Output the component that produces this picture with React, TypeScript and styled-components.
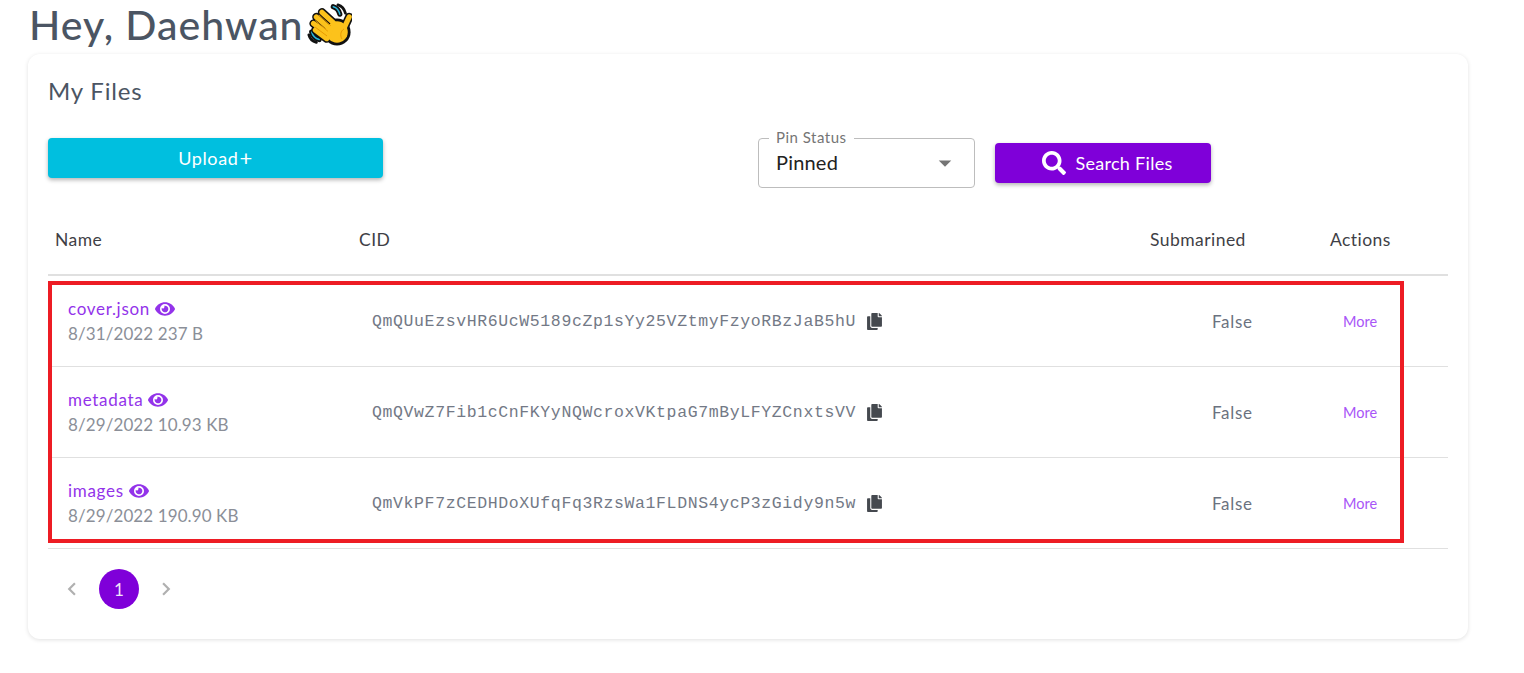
import React from "react";
import styled, { createGlobalStyle } from "styled-components";
import { FaCopy, FaEye, FaSearch } from "react-icons/fa";
import { MdArrowDropDown, MdChevronLeft, MdChevronRight } from "react-icons/md";

const font = `Lato, "Open Sans", sans-serif`;

const files = [
  {
    name: "cover.json",
    meta: "8/31/2022 237 B",
    cid: "QmQUuEzsvHR6UcW5189cZp1sYy25VZtmyFzyoRBzJaB5hU",
  },
  {
    name: "metadata",
    meta: "8/29/2022 10.93 KB",
    cid: "QmQVwZ7Fib1cCnFKYyNQWcroxVKtpaG7mByLFYZCnxtsVV",
  },
  {
    name: "images",
    meta: "8/29/2022 190.90 KB",
    cid: "QmVkPF7zCEDHDoXUfqFq3RzsWa1FLDNS4ycP3zGidy9n5w",
  },
];

// waving hand, one black pass for the outline and one yellow pass on top
const fingers = "M21 12L33 23M15 17L30 30M12 24L28 35M14 31L26 40M50 17L44 30";

const Wave = () => (
  <WaveIcon viewBox="5 1 48 48">
    <g fill="none" strokeLinecap="round">
      <path d="M33 6c4 1 6 4 7 8" stroke="#111" strokeWidth="5.5" />
      <path d="M10 33c1 4 4 7 8 8" stroke="#111" strokeWidth="5.5" />
      <path d="M33 6c4 1 6 4 7 8M10 33c1 4 4 7 8 8" stroke="#2bb7dc" strokeWidth="1.6" />
      <path d="M38 4c4 1 7 5 8 9" stroke="#111" strokeWidth="3" />
      <path d="M7 36c1 4 4 7 8 8" stroke="#111" strokeWidth="3" />
      <path d={fingers} stroke="#111" strokeWidth="9" />
    </g>
    <circle cx="37" cy="33" r="14.5" fill="#111" />
    <circle cx="37" cy="33" r="11.5" fill="#fcc21b" />
    <path d={fingers} fill="none" stroke="#fcc21b" strokeWidth="5.6" strokeLinecap="round" />
    <path
      d="M18 15L30 26M14 21L27 32M14 28L26 37M44 30c-3 2-4 6-2 10"
      fill="none"
      stroke="#e59600"
      strokeWidth="1"
      strokeLinecap="round"
    />
  </WaveIcon>
);

const App = () => {
  return (
    <Page>
      <GlobalStyle />
      <Title>
        Hey, Daehwan
        <Wave />
      </Title>
      <Card>
        <CardTitle>My Files</CardTitle>
        <Toolbar>
          <UploadButton>
            Upload<PlusSign>+</PlusSign>
          </UploadButton>
          <FilterGroup>
            <SelectBox>
              <SelectLegend>Pin Status</SelectLegend>
              <SelectValue>Pinned</SelectValue>
              <MdArrowDropDown color="#757575" size={30} />
            </SelectBox>
            <SearchButton>
              <FaSearch size={24} />
              Search Files
            </SearchButton>
          </FilterGroup>
        </Toolbar>
        <Table>
          <HeaderRow>
            <HeaderCell>Name</HeaderCell>
            <HeaderCell>CID</HeaderCell>
            <HeaderCell>Submarined</HeaderCell>
            <HeaderCell>Actions</HeaderCell>
          </HeaderRow>
          <Rows>
            <Highlight />
            {files.map((file) => (
              <Row key={file.cid}>
                <NameCell>
                  <FileName>
                    {file.name}
                    <FaEye size={20} />
                  </FileName>
                  <FileMeta>{file.meta}</FileMeta>
                </NameCell>
                <CidCell>
                  <Cid>{file.cid}</Cid>
                  <FaCopy color="#45494f" size={17} />
                </CidCell>
                <Status>False</Status>
                <More>More</More>
              </Row>
            ))}
          </Rows>
        </Table>
        <Pager>
          <MdChevronLeft color="#b0b0b0" size={26} />
          <PageNumber>1</PageNumber>
          <MdChevronRight color="#b0b0b0" size={26} />
        </Pager>
      </Card>
    </Page>
  );
};

export default App;

const GlobalStyle = createGlobalStyle`
  html, body {
    margin: 0;
    background: #fff;
    font-family: ${font};
  }
`;
const Page = styled.div`
  padding: 0 56px 0 28px;
  height: 673px;
  box-sizing: border-box;
  overflow: hidden;
`;
const Title = styled.h1`
  display: flex;
  align-items: center;
  height: 54px;
  box-sizing: border-box;
  margin: 0;
  padding: 0 0 6px 1px;
  font-size: 41px;
  font-weight: 500;
  letter-spacing: 1px;
  color: #4b5563;
`;
const WaveIcon = styled.svg`
  align-self: flex-start;
  width: 45px;
  height: 45px;
  margin: 2px 0 0 3px;
`;
const Card = styled.div`
  height: 585px;
  box-sizing: border-box;
  padding: 20px;
  border-radius: 12px;
  background: #fff;
  box-shadow: 0 1px 4px rgba(0, 0, 0, 0.12);
`;
const CardTitle = styled.div`
  height: 33px;
  line-height: 33px;
  font-size: 24px;
  letter-spacing: 0.8px;
  color: #4b5563;
`;
const Toolbar = styled.div`
  display: flex;
  justify-content: space-between;
  align-items: flex-start;
  margin-top: 31px;
  padding-right: 237px;
`;
const UploadButton = styled.button`
  display: flex;
  align-items: center;
  justify-content: center;
  width: 335px;
  height: 40px;
  border: 0;
  border-radius: 4px;
  background: #00bfdf;
  color: #fff;
  font-family: ${font};
  font-size: 18px;
  letter-spacing: 0.6px;
  box-shadow: 0 2px 4px rgba(0, 0, 0, 0.3);
`;
const PlusSign = styled.span`
  margin-left: 1px;
  font-size: 22px;
  line-height: 1;
`;
const FilterGroup = styled.div`
  display: flex;
  align-items: center;
  gap: 20px;
`;
const SelectBox = styled.div`
  position: relative;
  display: flex;
  align-items: center;
  justify-content: space-between;
  width: 217px;
  height: 50px;
  box-sizing: border-box;
  padding: 0 14px 0 17px;
  border: 1px solid #bdbdbd;
  border-radius: 4px;
`;
const SelectLegend = styled.span`
  position: absolute;
  top: -11px;
  left: 10px;
  padding: 0 7px;
  background: #fff;
  font-size: 15px;
  letter-spacing: 0.5px;
  line-height: 18px;
  color: #757575;
`;
const SelectValue = styled.span`
  margin-top: -3px;
  font-size: 20px;
  letter-spacing: 0.2px;
  color: #222;
`;
const SearchButton = styled.button`
  display: flex;
  align-items: center;
  justify-content: center;
  gap: 9px;
  width: 216px;
  height: 40px;
  padding: 0 0 0 9px;
  border: 0;
  border-radius: 4px;
  background: #7f00d9;
  color: #fff;
  font-family: ${font};
  font-size: 18px;
  letter-spacing: 0.3px;
  box-shadow: 0 2px 4px rgba(0, 0, 0, 0.3);
`;
const Table = styled.div`
  margin-top: 5px;
`;
const columns = `304px 791px 180px 1fr`;
const HeaderRow = styled.div`
  display: grid;
  grid-template-columns: ${columns};
  align-items: center;
  height: 83px;
  box-sizing: border-box;
  padding-top: 11px;
  border-bottom: 2px solid #e0e0e0;
`;
const HeaderCell = styled.div`
  padding-left: 7px;
  font-size: 17.5px;
  letter-spacing: 0.45px;
  color: #3f3f46;
`;
const Rows = styled.div`
  position: relative;
`;
const Highlight = styled.div`
  position: absolute;
  top: 5px;
  left: 0;
  width: 1356px;
  height: 262px;
  box-sizing: border-box;
  border: 4px solid #ed1c24;
  pointer-events: none;
`;
const Row = styled.div`
  display: grid;
  grid-template-columns: ${columns};
  align-items: center;
  height: 91px;
  box-sizing: border-box;
  border-bottom: 1px solid #e0e0e0;
`;
const NameCell = styled.div`
  padding-left: 20px;
`;
const FileName = styled.div`
  display: flex;
  align-items: center;
  gap: 5px;
  font-size: 17px;
  letter-spacing: 0.7px;
  line-height: 24px;
  color: #9333ea;
`;
const FileMeta = styled.div`
  margin-top: 1px;
  font-size: 17px;
  letter-spacing: 0.1px;
  line-height: 24px;
  color: #8b8f98;
`;
const CidCell = styled.div`
  display: flex;
  align-items: center;
  gap: 10px;
  padding-left: 20px;
`;
const Cid = styled.span`
  font-family: "Liberation Mono", monospace;
  font-size: 16.5px;
  letter-spacing: 0.62px;
  color: #737986;
`;
const Status = styled.div`
  padding-left: 69px;
  font-size: 17px;
  letter-spacing: 0.7px;
  color: #6b7280;
`;
const More = styled.div`
  padding-left: 20px;
  font-size: 14.5px;
  color: #a855f7;
`;
const Pager = styled.div`
  display: flex;
  align-items: center;
  gap: 14px;
  margin-top: 20px;
  padding-left: 11px;
`;
const PageNumber = styled.div`
  display: flex;
  align-items: center;
  justify-content: center;
  width: 40px;
  height: 40px;
  border-radius: 50%;
  background: #7f00d9;
  color: #f0e6fa;
  font-size: 17px;
`;
